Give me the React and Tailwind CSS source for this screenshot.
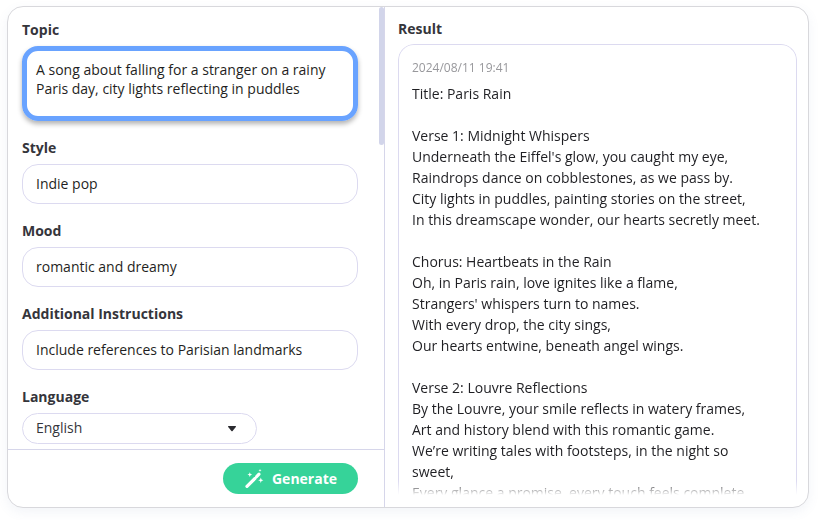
import { useState } from 'react'

const fields = [
  { id: 'style', label: 'Style', value: 'Indie pop' },
  { id: 'mood', label: 'Mood', value: 'romantic and dreamy' },
  { id: 'instructions', label: 'Additional Instructions', value: 'Include references to Parisian landmarks' },
]

const lyrics = `Title: Paris Rain

Verse 1: Midnight Whispers
Underneath the Eiffel's glow, you caught my eye,
Raindrops dance on cobblestones, as we pass by.
City lights in puddles, painting stories on the street,
In this dreamscape wonder, our hearts secretly meet.

Chorus: Heartbeats in the Rain
Oh, in Paris rain, love ignites like a flame,
Strangers' whispers turn to names.
With every drop, the city sings,
Our hearts entwine, beneath angel wings.

Verse 2: Louvre Reflections
By the Louvre, your smile reflects in watery frames,
Art and history blend with this romantic game.
We’re writing tales with footsteps, in the night so sweet,
Every glance a promise, every touch feels complete.`

function WandIcon() {
  return (
    <svg viewBox="0 0 20 20" className="w-5 h-5" fill="currentColor" aria-hidden="true">
      <path d="M3 17.4 L11 9.4" stroke="currentColor" strokeWidth="3.2" strokeLinecap="round" />
      <path d="M12.6 7.6 L15 5.2" stroke="currentColor" strokeWidth="3.2" strokeLinecap="round" />
      <path d="M5.8 3.2 L6.5 4.9 L8.2 5.6 L6.5 6.3 L5.8 8 L5.1 6.3 L3.4 5.6 L5.1 4.9 Z" />
      <path d="M16.8 8.6 L17.5 10.5 L19.4 11.3 L17.5 12.1 L16.8 14 L16.1 12.1 L14.2 11.3 L16.1 10.5 Z" />
      <path d="M16 0 L16.5 1 L17.6 1.4 L16.5 1.8 L16 2.8 L15.5 1.8 L14.4 1.4 L15.5 1 Z" />
    </svg>
  )
}

function Field({ id, label, children }) {
  return (
    <div className="flex flex-col gap-1.5">
      <label htmlFor={id} className="text-sm leading-5 font-bold text-[#35353b]">
        {label}
      </label>
      {children}
    </div>
  )
}

export default function App() {
  const [topic, setTopic] = useState(
    'A song about falling for a stranger on a rainy Paris day, city lights reflecting in puddles'
  )
  const [language, setLanguage] = useState('English')

  return (
    <div className="h-screen bg-white pt-1.5 pr-[11px] pb-3 pl-[7px] font-['Open_Sans','Noto_Sans',sans-serif] text-sm text-[#1f1f23]">
      <div className="h-full grid grid-cols-[377fr_423fr] grid-rows-[minmax(0,1fr)] overflow-hidden rounded-2xl border border-[#d8d8dc] bg-white shadow-[0_4px_12px_rgba(90,120,160,0.08)]">
        <section className="relative flex min-w-0 flex-col border-r border-[#d6d6ea]">
          <form id="song-form" onSubmit={(e) => e.preventDefault()}
            className="flex min-h-0 flex-1 flex-col gap-[17px] overflow-hidden pt-[13px] pl-3.5 pr-[26px]">
            <Field id="topic" label="Topic">
              <textarea id="topic" value={topic} onChange={(e) => setTopic(e.target.value)}
                className="h-[75px] w-full resize-none rounded-2xl border-5 border-[#69a3ff] px-[9px] py-[9px] leading-[19px]
                           shadow-[0_3px_5px_rgba(0,0,0,0.3)] outline-none" />
            </Field>

            {fields.map((field) => (
              <Field key={field.id} id={field.id} label={field.label}>
                <input id={field.id} type="text" defaultValue={field.value}
                  className="h-10 w-full rounded-2xl border border-[#dcdaf0] px-[13px] pb-0.5 outline-none" />
              </Field>
            ))}

            <Field id="language" label="Language">
              <div className="relative w-[70%]">
                <select id="language" value={language} onChange={(e) => setLanguage(e.target.value)}
                  className="h-[31px] w-full appearance-none rounded-full border border-[#dcdaf0] px-[13px] pb-0.5 text-[#35353b] outline-none">
                  <option>English</option>
                  <option>French</option>
                  <option>Spanish</option>
                </select>
                <svg viewBox="0 0 8 6" className="pointer-events-none absolute top-[13px] right-[21px] h-1.5 w-2" fill="#2b2b30" aria-hidden="true">
                  <path d="M0.4 0 H7.6 Q8.2 0.4 7.8 1 L4.6 5 Q4 5.6 3.4 5 L0.2 1 Q-0.2 0.4 0.4 0 Z" />
                </svg>
              </div>
            </Field>
          </form>

          {/* scroll thumb */}
          <div className="absolute top-0 right-0 h-[138px] w-[5px] rounded-full bg-[#d2d5ea]" />

          <footer className="flex justify-end border-t border-[#d6d6ea] py-[13px] pr-[26px]">
            <button type="submit" form="song-form"
              className="flex h-[31px] w-[135px] items-center justify-center gap-2 rounded-full bg-[#36d399] font-bold text-white">
              <WandIcon />
              Generate
            </button>
          </footer>
        </section>

        <section className="flex min-w-0 flex-col gap-[5px] pt-3 pr-[11px] pb-3 pl-[13px]">
          <h2 className="leading-5 font-bold text-[#35353b]">Result</h2>
          <div className="min-h-0 flex-1 overflow-hidden rounded-t-2xl border border-b-0 border-[#dcdaf0] pt-[13px] pr-8 pl-[13px] mask-[linear-gradient(to_top,transparent,black_14px)]">
            <time dateTime="2024-08-11T19:41" className="block text-xs leading-5 text-[#98989c]">2024/08/11 19:41</time>
            <p className="mt-[5px] leading-[21px] whitespace-pre-line">{lyrics}</p>
          </div>
        </section>
      </div>
    </div>
  )
}
